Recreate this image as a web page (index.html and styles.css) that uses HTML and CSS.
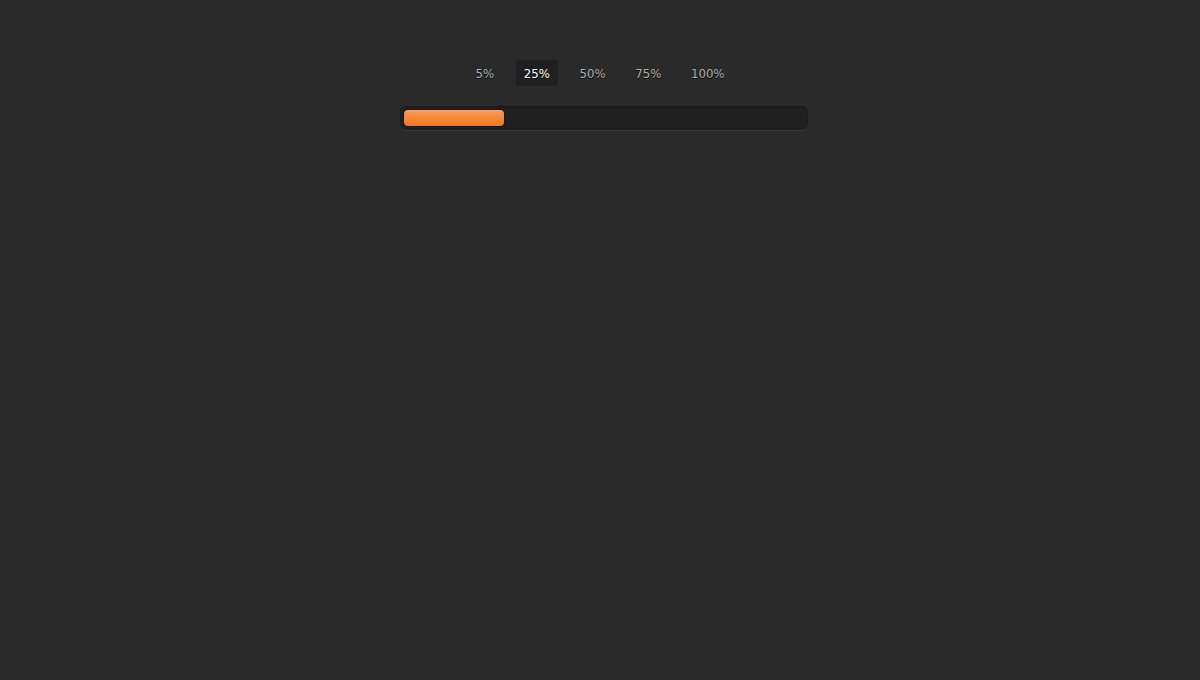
FILE: index.html
```html
<!DOCTYPE html>
<html lang="en">
	<head>
		<meta charset="utf-8" />
		<title>Progress Bar</title>
		<link rel="stylesheet" href="styles.css">
	</head>
	<body>
		<div class="container">
			<input type="radio" class="radio" name="progress" value="five" id="five">
			<label for="five" class="label">5%</label>

			<input type="radio" class="radio" name="progress" value="twentyfive" id="twentyfive" checked>
			<label for="twentyfive" class="label">25%</label>

			<input type="radio" class="radio" name="progress" value="fifty" id="fifty">
			<label for="fifty" class="label">50%</label>

			<input type="radio" class="radio" name="progress" value="seventyfive" id="seventyfive">
			<label for="seventyfive" class="label">75%</label>

			<input type="radio" class="radio" name="progress" value="onehundred" id="onehundred">
			<label for="onehundred" class="label">100%</label>

			<div class="progress">
				<div class="progress-bar"></div>
			</div>
		</div>
	</body>
</html>
```

FILE: styles.css
```css
body{
	margin: 0;
	font: 13px/20px "DejaVu Sans Condensed", "Noto Sans", sans-serif;
	color: #404040;
	background: #2a2a2a;
}
.container{
	max-width: 400px;
	margin: 60px auto;
	text-align: center;
}
/* radios stay focusable, only the labels are seen */
.radio{
	position: absolute;
	margin: 0;
	opacity: 0;
	pointer-events: none;
}
.label{
	display: inline-block;
	margin: 0 5px 20px;
	padding: 4px 8px 2px;
	color: #b0b0b0;
	text-shadow: 0 1px black;
	border-radius: 3px;
	cursor: pointer;
}
.radio:checked + .label{
	color: white;
	background: #202020;
}
.radio:focus-visible + .label{
	outline: 1px solid #f27011;
}
.progress{
	width: 100%;
	padding: 4px;
	background: #202020;
	border-radius: 6px;
	box-shadow: inset 0 1px 2px rgba(0, 0, 0, 0.25), 0 1px rgba(255, 255, 255, 0.08);
}
.progress-bar{
	height: 16px;
	border-radius: 4px;
	background-color: #f27011;
	background-image: linear-gradient(to bottom, rgba(255, 255, 255, 0.3), rgba(255, 255, 255, 0.05));
	box-shadow: 0 0 1px 1px rgba(0, 0, 0, 0.25), inset 0 1px rgba(255, 255, 255, 0.1);
	transition: width 0.4s linear;
}
#five:checked ~ .progress > .progress-bar{
	width: 5%;
}
#twentyfive:checked ~ .progress > .progress-bar{
	width: 25%;
}
#fifty:checked ~ .progress > .progress-bar{
	width: 50%;
}
#seventyfive:checked ~ .progress > .progress-bar{
	width: 75%;
}
#onehundred:checked ~ .progress > .progress-bar{
	width: 100%;
}
```
